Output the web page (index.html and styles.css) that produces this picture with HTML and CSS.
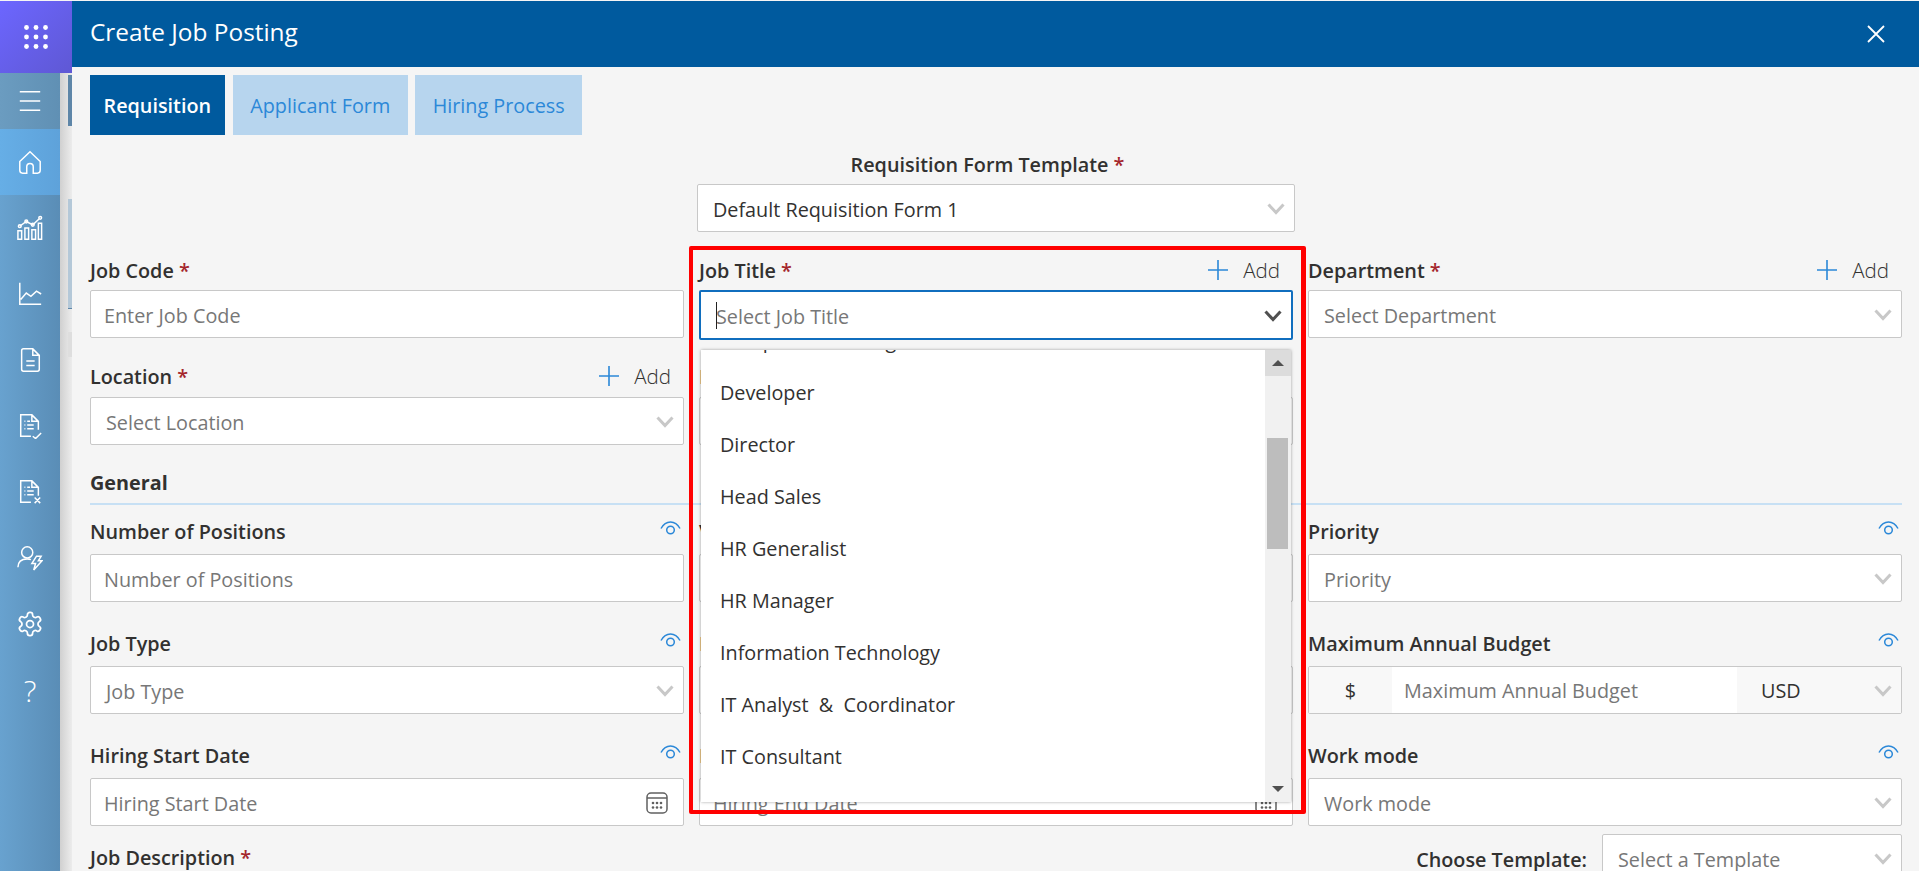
FILE: index.html
```html
<!DOCTYPE html>
<html lang="en">
<head>
  <meta charset="UTF-8" />
  <meta name="viewport" content="width=device-width, initial-scale=1.0" />
  <title>Create Job Posting</title>
  <link rel="stylesheet" href="styles.css">
</head>
<body>
  <div class="rail">
    <div class="logo">
      <svg width="24" height="24" viewBox="0 0 24 24" fill="#fff">
        <circle cx="2.5" cy="2.5" r="2.4"/><circle cx="12" cy="2.5" r="2.4"/><circle cx="21.5" cy="2.5" r="2.4"/>
        <circle cx="2.5" cy="12" r="2.4"/><circle cx="12" cy="12" r="2.4"/><circle cx="21.5" cy="12" r="2.4"/>
        <circle cx="2.5" cy="21.5" r="2.4"/><circle cx="12" cy="21.5" r="2.4"/><circle cx="21.5" cy="21.5" r="2.4"/>
      </svg>
    </div>
    <div class="rail-body">
      <nav class="nav">
        <a class="nav-toggle">
          <svg class="nav-icon" viewBox="0 0 28 28"><path d="M3 4h22M3 14h22M3 24h22"/></svg>
        </a>
        <a class="nav-item active">
          <svg class="nav-icon" viewBox="0 0 28 28"><path d="M3 13.500 14 3l11 10.500V23a3 3 0 0 1-3 3h-4.500v-7a3.500 3.500 0 0 0-7 0v7H6a3 3 0 0 1-3-3z"/></svg>
        </a>
        <a class="nav-item">
          <svg class="nav-icon" viewBox="0 0 28 28"><path d="M1 26V17h4v9zM8.500 26V14h4v12zM16 26V16h4v10zM23 26V9h3.500v17zM3 12l7-5 7 3.500L24 4"/><circle cx="3" cy="12" r="1.500"/><circle cx="10" cy="7" r="1.500"/><circle cx="17" cy="10.500" r="1.500"/><circle cx="25" cy="3" r="1.500"/></svg>
        </a>
        <a class="nav-item">
          <svg class="nav-icon" viewBox="0 0 28 28"><path d="M3 2v23h23M4 20l6-7 5 3.500L21 11l5 3"/></svg>
        </a>
        <a class="nav-item">
          <svg class="nav-icon" viewBox="0 0 28 28"><path d="M7 2h10l7 7v15a2 2 0 0 1-2 2H7a2 2 0 0 1-2-2V4a2 2 0 0 1 2-2zM17 2v7h7M10 15h9M10 20h9"/></svg>
        </a>
        <a class="nav-item">
          <svg class="nav-icon" viewBox="0 0 28 28"><path d="M15 25H4V2h12l7 7v9M16 2v7h7M8 9h1M11 9h3M8 13h1M11 13h7M8 17h1M11 17h7M17 25l3 2.500 6-6"/></svg>
        </a>
        <a class="nav-item">
          <svg class="nav-icon" viewBox="0 0 28 28"><path d="M15 25H4V2h12l7 7v9M16 2v7h7M8 9h1M11 9h3M8 13h1M11 13h7M8 17h1M11 17h7M19 20l6 6M25 20l-6 6"/></svg>
        </a>
        <a class="nav-item">
          <svg class="nav-icon" viewBox="0 0 28 28"><circle cx="11" cy="8" r="6"/><path d="M1 24c0-6 4-9 10-9 2 0 3 .3 4 .8"/><path d="M21 12h5l-3 5h4l-9 10 2-7h-4z"/></svg>
        </a>
        <a class="nav-item">
          <svg class="nav-icon gear" viewBox="0 0 24 24"><path d="M12.220 2h-.44a2 2 0 0 0-2 2v.18a2 2 0 0 1-1 1.730l-.43.25a2 2 0 0 1-2 0l-.15-.08a2 2 0 0 0-2.730.73l-.22.38a2 2 0 0 0 .73 2.730l.15.1a2 2 0 0 1 1 1.720v.51a2 2 0 0 1-1 1.740l-.15.09a2 2 0 0 0-.73 2.730l.22.38a2 2 0 0 0 2.730.73l.15-.08a2 2 0 0 1 2 0l.43.25a2 2 0 0 1 1 1.730V20a2 2 0 0 0 2 2h.44a2 2 0 0 0 2-2v-.18a2 2 0 0 1 1-1.730l.43-.25a2 2 0 0 1 2 0l.15.08a2 2 0 0 0 2.730-.73l.22-.39a2 2 0 0 0-.73-2.730l-.15-.08a2 2 0 0 1-1-1.740v-.5a2 2 0 0 1 1-1.740l.15-.09a2 2 0 0 0 .73-2.730l-.22-.38a2 2 0 0 0-2.730-.73l-.15.08a2 2 0 0 1-2 0l-.43-.25a2 2 0 0 1-1-1.730V4a2 2 0 0 0-2-2z"/><circle cx="12" cy="12" r="3"/></svg>
        </a>
        <a class="nav-item nav-help">?</a>
      </nav>
      <div class="peek">
        <span class="peek-a"></span>
        <span class="peek-b"></span>
        <span class="peek-c"></span>
      </div>
    </div>
  </div>

  <main class="modal">
    <header class="modal-head">
      <h1>Create Job Posting</h1>
      <svg class="close" viewBox="0 0 18 18"><path d="M1 1l16 16M17 1L1 17"/></svg>
    </header>

    <div class="tabs">
      <a class="tab current">Requisition</a>
      <a class="tab">Applicant Form</a>
      <a class="tab">Hiring Process</a>
    </div>

    <div class="template">
      <div class="template-label">Requisition Form Template <span class="req">*</span></div>
      <div class="box select filled">Default Requisition Form 1<svg class="chev"><use href="#chev"/></svg></div>
    </div>

    <div class="grid grid-top">
      <div class="field">
        <div class="label-row"><label>Job Code <span class="req">*</span></label></div>
        <div class="box">Enter Job Code</div>
      </div>
      <div class="field job-title">
        <div class="label-row"><label>Job Title <span class="req">*</span></label><a class="add"><svg viewBox="0 0 20 20"><path d="M10 0v20M0 10h20"/></svg>Add</a></div>
        <div class="box select focused"><i class="caret"></i>Select Job Title<svg class="chev"><use href="#chev"/></svg></div>
        <div class="dropdown">
          <ul class="options">
            <li>Compliance Manager</li>
            <li>Developer</li>
            <li>Director</li>
            <li>Head Sales</li>
            <li>HR Generalist</li>
            <li>HR Manager</li>
            <li>Information Technology</li>
            <li>IT Analyst&nbsp; &amp;&nbsp; Coordinator</li>
            <li>IT Consultant</li>
          </ul>
          <div class="scroll">
            <span class="scroll-btn"><i class="tri-up"></i></span>
            <span class="scroll-thumb"></span>
            <span class="scroll-end"><i class="tri-down"></i></span>
          </div>
        </div>
      </div>
      <div class="field">
        <div class="label-row"><label>Department <span class="req">*</span></label><a class="add"><svg viewBox="0 0 20 20"><path d="M10 0v20M0 10h20"/></svg>Add</a></div>
        <div class="box select dept">Select Department<svg class="chev"><use href="#chev"/></svg></div>
      </div>
      <div class="field">
        <div class="label-row"><label>Location <span class="req">*</span></label><a class="add"><svg viewBox="0 0 20 20"><path d="M10 0v20M0 10h20"/></svg>Add</a></div>
        <div class="box select">Select Location<svg class="chev"><use href="#chev"/></svg></div>
      </div>
      <div class="field">
        <div class="label-row"><label>Hiring Manager</label></div>
        <div class="box select">Hiring Manager<svg class="chev"><use href="#chev"/></svg></div>
      </div>
    </div>

    <div class="section">General</div>

    <div class="grid grid-general">
      <div class="field">
        <div class="label-row"><label>Number of Positions</label><svg class="eye"><use href="#eye"/></svg></div>
        <div class="box">Number of Positions</div>
      </div>
      <div class="field">
        <div class="label-row"><label>Vacancy</label></div>
        <div class="box">Vacancy</div>
      </div>
      <div class="field">
        <div class="label-row"><label>Priority</label><svg class="eye"><use href="#eye"/></svg></div>
        <div class="box select">Priority<svg class="chev"><use href="#chev"/></svg></div>
      </div>
      <div class="field">
        <div class="label-row"><label>Job Type</label><svg class="eye"><use href="#eye"/></svg></div>
        <div class="box select">Job Type<svg class="chev"><use href="#chev"/></svg></div>
      </div>
      <div class="field">
        <div class="label-row"><label>Minimum Annual Budget</label></div>
        <div class="box">Minimum Annual Budget</div>
      </div>
      <div class="field">
        <div class="label-row"><label>Maximum Annual Budget</label><svg class="eye"><use href="#eye"/></svg></div>
        <div class="box budget">
          <span class="addon">$</span>
          <span class="budget-input">Maximum Annual Budget</span>
          <span class="currency">USD<svg class="chev"><use href="#chev"/></svg></span>
        </div>
      </div>
      <div class="field">
        <div class="label-row"><label>Hiring Start Date</label><svg class="eye"><use href="#eye"/></svg></div>
        <div class="box date">Hiring Start Date<svg class="cal"><use href="#cal"/></svg></div>
      </div>
      <div class="field">
        <div class="label-row"><label>Hiring End Date</label></div>
        <div class="box date">Hiring End Date<svg class="cal"><use href="#cal"/></svg></div>
      </div>
      <div class="field">
        <div class="label-row"><label>Work mode</label><svg class="eye"><use href="#eye"/></svg></div>
        <div class="box select">Work mode<svg class="chev"><use href="#chev"/></svg></div>
      </div>
    </div>

    <div class="desc-row">
      <label>Job Description <span class="req">*</span></label>
      <div class="choose">
        <label>Choose Template:</label>
        <div class="box select tpl">Select a Template<svg class="chev"><use href="#chev"/></svg></div>
      </div>
    </div>
  </main>

  <div class="highlight"></div>

  <svg class="defs" width="0" height="0">
    <symbol id="chev" viewBox="0 0 18 12"><path d="M1.500 1.500 9 9.500l7.500-8" fill="none" stroke="currentColor" stroke-width="3"/></symbol>
    <symbol id="eye" viewBox="0 0 21 14"><path d="M1 7.500C3.500 3 6.500 1 10.500 1s7 2 9.500 6.500" fill="none" stroke="currentColor" stroke-width="1.500"/><circle cx="10.500" cy="9" r="3.800" fill="none" stroke="currentColor" stroke-width="1.500"/></symbol>
    <symbol id="cal" viewBox="0 0 22 22"><rect x="1" y="1" width="20" height="20" rx="4" fill="none" stroke="currentColor" stroke-width="1.500"/><path d="M1 6h20" fill="none" stroke="currentColor" stroke-width="1.500"/><circle cx="7" cy="11" r="1.300" fill="currentColor"/><circle cx="11" cy="11" r="1.300" fill="currentColor"/><circle cx="15" cy="11" r="1.300" fill="currentColor"/><circle cx="7" cy="15.500" r="1.300" fill="currentColor"/><circle cx="11" cy="15.500" r="1.300" fill="currentColor"/><circle cx="15" cy="15.500" r="1.300" fill="currentColor"/></symbol>
  </svg>
</body>
</html>
```

FILE: styles.css
```css
* {
  box-sizing: border-box;
}
html, body {
  margin: 0;
  height: 100%;
  overflow: hidden;
}
body {
  display: flex;
  font-family: "Open Sans", "Noto Sans", sans-serif;
  font-size: 19.800px;
  color: #323130;
  background: #f5f5f5;
  padding-top: 1px;
}
a {
  text-decoration: none;
  color: inherit;
}
.defs {
  position: absolute;
}

/* left rail */
.rail {
  width: 72px;
  flex: none;
  display: flex;
  flex-direction: column;
}
.logo {
  height: 72px;
  display: flex;
  align-items: center;
  justify-content: center;
  background: linear-gradient(135deg, #6c66ff, #5f58d4);
}
.rail-body {
  flex: 1;
  display: flex;
}
.nav {
  width: 60px;
  background: linear-gradient(90deg, #68a2cf, #5a8db6);
  display: flex;
  flex-direction: column;
}
.nav-toggle {
  height: 56px;
  display: flex;
  align-items: center;
  justify-content: center;
  background: linear-gradient(90deg, #6b9cc0, #6090b4);
}
.nav-item {
  height: 66px;
  display: flex;
  align-items: center;
  justify-content: center;
}
.nav-item.active {
  background: linear-gradient(90deg, #66aee6, #5ea2da);
}
.nav-icon {
  width: 26px;
  height: 26px;
  fill: none;
  stroke: #fff;
  stroke-width: 1.600;
}
.gear {
  width: 28px;
  height: 28px;
  stroke-width: 1.500;
}
.nav-help {
  color: #fff;
  font-size: 30px;
  font-weight: 300;
}
.peek {
  flex: 1;
  position: relative;
  background: linear-gradient(90deg, #d0d0d0, #ececec);
}
.peek span {
  position: absolute;
  left: 8px;
  right: 0;
}
.peek-a {
  top: 2px;
  height: 51px;
  background: #5e86a8;
}
.peek-b {
  top: 126px;
  height: 110px;
  background: #b4c8d8;
  border-bottom: 1px solid #5e86a8;
}
.peek-c {
  top: 259px;
  height: 25px;
  background: #dedede;
}

/* modal */
.modal {
  flex: 1;
  min-width: 0;
  position: relative;
  padding: 0 17px 0 18px;
}
.modal-head {
  height: 66px;
  margin: 0 -17px 0 -18px;
  padding: 0 34px 0 18px;
  background: #005a9e;
  color: #fff;
  display: flex;
  align-items: center;
  justify-content: space-between;
}
.modal-head h1 {
  margin: -5px 0 0;
  font-size: 24.400px;
  font-weight: 400;
}
.close {
  width: 18px;
  height: 18px;
  stroke: #fff;
  stroke-width: 1.800;
}
.tabs {
  display: flex;
  gap: 7px;
  margin-top: 8px;
}
.tab {
  height: 60px;
  padding: 0 17.700px;
  display: flex;
  align-items: center;
  background: #b7d5ee;
  color: #2b88d8;
}
.tab.current {
  background: #005a9e;
  color: #fff;
  font-weight: 600;
  padding: 0 13.500px;
  margin-right: 1px;
}
.template {
  width: 598px;
  margin: 18px auto 0;
}
.template-label {
  text-align: center;
  font-weight: 600;
  line-height: 24px;
  margin-bottom: 7px;
  padding-right: 17px;
}
.req {
  color: #a4262c;
}
.box {
  height: 48px;
  padding: 2px 13px 0;
  background: #fff;
  border: 1px solid #c8c8c8;
  border-radius: 2px;
  display: flex;
  align-items: center;
  color: #777;
  position: relative;
  white-space: nowrap;
}
.box.filled {
  color: #323130;
}
.box.select {
  padding-left: 15px;
}
.chev {
  position: absolute;
  right: 9px;
  top: 50%;
  margin-top: -5px;
  width: 18px;
  height: 12px;
  color: #c8c8c8;
}
.grid {
  display: grid;
  grid-template-columns: repeat(3, 1fr);
  column-gap: 15px;
}
.grid-top {
  margin-top: 23px;
  row-gap: 23px;
}
.grid-top .label-row {
  margin-bottom: 5px;
}
.grid-top .field:nth-child(n+4) .label-row {
  margin-bottom: 6px;
}
.grid-general {
  margin-top: 11px;
  row-gap: 26px;
}
.grid-general .label-row {
  margin-bottom: 8px;
}
.field {
  position: relative;
  min-width: 0;
}
.job-title {
  z-index: 5;
}
.label-row {
  height: 30px;
  display: flex;
  align-items: center;
  justify-content: space-between;
}
label {
  font-weight: 600;
}
.add {
  display: flex;
  align-items: center;
  font-weight: 300;
  font-size: 20.500px;
  margin-right: 13px;
}
.add svg {
  width: 20px;
  height: 20px;
  margin-right: 15px;
  stroke: #2b88d8;
  stroke-width: 1.600;
}
.eye {
  width: 21px;
  height: 14px;
  color: #2b88d8;
  margin: -6px 3px 0 0;
}
.box.focused {
  height: 50px;
  margin-bottom: -2px;
  border: 2px solid #106ebe;
  padding-left: 15px;
}
.focused .chev {
  color: #505050;
}
.caret {
  position: absolute;
  left: 15px;
  top: 10px;
  height: 27px;
  width: 1px;
  background: #222;
}
.dept {
  margin-top: 1px;
  margin-bottom: -1px;
}
.cal {
  position: absolute;
  right: 15px;
  top: 13px;
  width: 22px;
  height: 22px;
  color: #606060;
}
.section {
  margin-top: 24px;
  height: 36px;
  line-height: 28px;
  font-weight: 700;
  border-bottom: 2px solid #c7e0f4;
}
.budget {
  padding: 0;
  overflow: hidden;
}
.addon {
  width: 83px;
  height: 100%;
  background: #f8f8f8;
  color: #323130;
  display: flex;
  align-items: center;
  justify-content: center;
}
.budget-input {
  flex: 1;
  padding-left: 12px;
}
.currency {
  width: 164px;
  height: 100%;
  background: #f8f8f8;
  color: #323130;
  padding-left: 24px;
  display: flex;
  align-items: center;
}
.desc-row {
  margin-top: 8px;
  display: flex;
  align-items: center;
  justify-content: space-between;
}
.desc-row > label {
  margin-top: -2px;
}
.choose {
  display: flex;
  align-items: center;
  gap: 15px;
}
.choose label {
  margin-top: 2px;
}
.tpl {
  width: 300px;
}

/* open job title list */
.dropdown {
  position: absolute;
  top: 95px;
  left: 2px;
  right: 2px;
  height: 452px;
  background: #fff;
  box-shadow: 0 0 3px rgba(0, 0, 0, 0.35);
  display: flex;
  overflow: hidden;
}
.options {
  flex: 1;
  list-style: none;
  margin: -36px 0 0;
  padding: 0 0 0 19px;
  color: #323130;
}
.options li {
  height: 52px;
  display: flex;
  align-items: center;
}
.scroll {
  width: 26px;
  background: #f1f1f1;
  position: relative;
}
.scroll-btn {
  display: flex;
  height: 26px;
  align-items: center;
  justify-content: center;
  background: #dcdcdc;
}
.scroll-thumb {
  position: absolute;
  left: 2px;
  right: 3px;
  top: 88px;
  height: 111px;
  background: #bdbdbd;
}
.scroll-end {
  position: absolute;
  bottom: 0;
  left: 0;
  right: 0;
  height: 26px;
  display: flex;
  align-items: center;
  justify-content: center;
}
.tri-up {
  border: 6px solid transparent;
  border-top: 0;
  border-bottom: 6px solid #505050;
}
.tri-down {
  border: 6px solid transparent;
  border-bottom: 0;
  border-top: 6px solid #505050;
}

/* red annotation */
.highlight {
  position: absolute;
  left: 689px;
  top: 246px;
  width: 617px;
  height: 568px;
  border: 4px solid #f00;
  border-right-width: 5px;
  border-radius: 2px;
  pointer-events: none;
}
```
